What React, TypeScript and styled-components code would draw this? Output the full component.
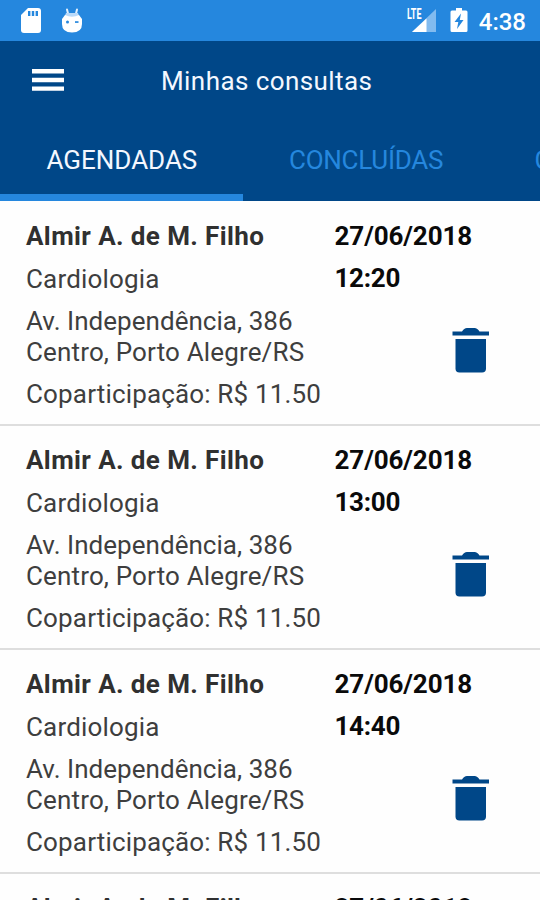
import React from 'react';
import styled, { createGlobalStyle } from 'styled-components';

const navy = '#004788';
const sky = '#2587de';

const GlobalStyle = createGlobalStyle`
  * { box-sizing: border-box; }
  html, body { margin: 0; height: 900px; overflow: hidden; background: #fff; }
  body { font-family: Roboto, "Liberation Sans", sans-serif; }
`;

const Screen = styled.div`
  width: 540px;
  height: 900px;
  overflow: hidden;
  display: flex;
  flex-direction: column;
  background: #fefefe;
`;

const StatusBar = styled.div`
  flex: none;
  height: 41px;
  padding: 0 14px 0 20px;
  display: flex;
  align-items: center;
  justify-content: space-between;
  background: ${sky};
  color: #fff;
`;

const StatusGroup = styled.div`
  display: flex;
  align-items: center;
  height: 41px;
`;

const Icon = styled.svg<{ $gap?: number }>`
  display: block;
  flex: none;
  margin-right: ${(p) => p.$gap ?? 0}px;
`;

const Clock = styled.span`
  font-size: 24px;
  font-weight: 500;
  line-height: 28px;
  padding-top: 2px;
`;

const AppBar = styled.header`
  flex: none;
  height: 79px;
  padding-left: 32px;
  display: flex;
  align-items: center;
  background: ${navy};
`;

const MenuButton = styled.button`
  border: 0;
  padding: 0 0 2px;
  margin: 0 97px 0 0;
  background: none;
`;

const Title = styled.h1`
  margin: 0;
  font-size: 26px;
  line-height: 30px;
  font-weight: 400;
  color: #f4f8ff;
  letter-spacing: 0.42px;
`;

const Tabs = styled.nav`
  flex: none;
  height: 81px;
  display: flex;
  background: ${navy};
  overflow: hidden;
`;

const Tab = styled.div<{ $active?: boolean; $width: number }>`
  flex: none;
  width: ${(p) => p.$width}px;
  padding-left: 46.5px;
  padding-top: 25px;
  border-bottom: 7px solid ${(p) => (p.$active ? sky : 'transparent')};
  color: ${(p) => (p.$active ? '#f4f8ff' : sky)};
  font-size: 26px;
  line-height: 30px;
  letter-spacing: ${(p) => (p.$active ? 0 : -0.25)}px;
  white-space: nowrap;
`;

const List = styled.main`
  padding-top: 1px;
`;

const Row = styled.article`
  height: 224px;
  padding: 19px 0 0 26px;
  display: flex;
  border-bottom: 2px solid #dedede;
`;

const Details = styled.div`
  width: 308.5px;
  flex: none;
  color: #3e3e3e;
  font-size: 26px;
  line-height: 30.5px;
  white-space: nowrap;
`;

const Line = styled.div<{ $strong?: boolean; $spacing?: number; $tight?: boolean }>`
  margin-bottom: ${(p) => (p.$tight ? 0 : 12)}px;
  font-weight: ${(p) => (p.$strong ? 700 : 400)};
  color: ${(p) => (p.$strong ? '#303030' : 'inherit')};
  letter-spacing: ${(p) => p.$spacing ?? 0}px;
`;

const Schedule = styled.div`
  flex: 1;
  display: flex;
  flex-direction: column;
`;

const When = styled.div<{ $spacing: number }>`
  margin-bottom: 12px;
  font-size: 26px;
  line-height: 30px;
  font-weight: 700;
  color: #0a0a0a;
  letter-spacing: ${(p) => p.$spacing}px;
`;

const DeleteButton = styled.button`
  width: 38px;
  margin: 19px 0 0 117.5px;
  padding: 0;
  border: 0;
  background: none;
`;

const SdCard = () => (
  <Icon width="22" height="27" viewBox="0 0 22 27" $gap={19}>
    <path fill="#fff" d="M8 1h10a3 3 0 0 1 3 3v19a3 3 0 0 1-3 3H4a3 3 0 0 1-3-3V8z" />
    <path fill={sky} d="M8 4h2.4v5H8zM11.8 4h2.4v5h-2.4zM15.6 4H18v5h-2.4z" />
  </Icon>
);

const DroidHead = () => (
  <Icon width="22" height="26" viewBox="0 0 22 26">
    <path fill="none" stroke="#e4f1fd" strokeWidth="2" strokeLinecap="round" d="M6 1.500l1 4M16 1.500l-1 4" />
    <path fill="#b9dafa" d="M5 5h12l2 5H3z" />
    <path fill="#fff" d="M4 7q7 3.500 14 0l3 4v5q0 8.500-10 8.500T1 16v-5z" />
    <circle cx="6.500" cy="14" r="1.500" fill={sky} />
    <path fill={sky} d="M14 13.200h3.500v1.700H14z" />
  </Icon>
);

const SignalBox = styled.div`
  position: relative;
  width: 30px;
  height: 25px;
  margin-right: 14px;
`;

const Network = styled.span`
  position: absolute;
  left: 1px;
  top: -1px;
  font: 700 14px/14px Roboto, sans-serif;
  transform: scaleX(0.64);
  transform-origin: left;
`;

const Signal = () => (
  <SignalBox>
    <Icon width="30" height="25" viewBox="0 0 30 25">
      <path fill="#82bbef" d="M30 1v23H6z" />
      <path fill="#fff" d="M20.500 10.500V24H6z" />
      <path fill={sky} d="M0 0h17v12H0z" />
    </Icon>
    <Network>LTE</Network>
  </SignalBox>
);

const Battery = () => (
  <Icon width="18" height="26" viewBox="0 0 18 26" $gap={11}>
    <path fill="#fff" d="M6 0h6v2.500h4q1.500 0 1.500 1.500v18.500q0 1.500-1.500 1.500H2q-1.500 0-1.500-1.500V4q0-1.500 1.500-1.500h4z" />
    <path fill={sky} d="M11 5.500L4.500 14h3.800L7 21l6.500-9H9.800z" />
  </Icon>
);

const Trash = () => (
  <Icon width="38" height="50" viewBox="0 0 38 50">
    <path fill={navy} d="M3.500 15H34v29.500q0 4-4 4H7.500q-4 0-4-4z" />
    <path fill={navy} d="M.5 7.500h9.500Q12 4 15 4h7.500q3 0 5 3.500H37v4H.5z" />
  </Icon>
);

const times = ['12:20', '13:00', '14:40', '15:20'];

export default function App() {
  return (
    <Screen>
      <GlobalStyle />
      <StatusBar>
        <StatusGroup>
          <SdCard />
          <DroidHead />
        </StatusGroup>
        <StatusGroup>
          <Signal />
          <Battery />
          <Clock>4:38</Clock>
        </StatusGroup>
      </StatusBar>
      <AppBar>
        <MenuButton aria-label="Menu">
          <Icon width="32" height="22" viewBox="0 0 32 22">
            <path fill="#fff" d="M0 0h32v4.500H0zM0 8.700h32v4.500H0zM0 17.400h32v4.300H0z" />
          </Icon>
        </MenuButton>
        <Title>Minhas consultas</Title>
      </AppBar>
      <Tabs>
        <Tab $active $width={242.5}>AGENDADAS</Tab>
        <Tab $width={245.5}>CONCLUÍDAS</Tab>
        <Tab $width={246}>CANCELADAS</Tab>
      </Tabs>
      <List>
        {times.map((time) => (
          <Row key={time}>
            <Details>
              <Line $strong $spacing={0.4}>Almir A. de M. Filho</Line>
              <Line $spacing={0.18}>Cardiologia</Line>
              <Line $tight $spacing={0.04}>Av. Independência, 386</Line>
              <Line $spacing={0.15}>Centro, Porto Alegre/RS</Line>
              <Line $spacing={0.16}>Coparticipação: R$ 11.50</Line>
            </Details>
            <Schedule>
              <When $spacing={-0.1}>27/06/2018</When>
              <When $spacing={-0.3}>{time}</When>
              <DeleteButton aria-label="Excluir">
                <Trash />
              </DeleteButton>
            </Schedule>
          </Row>
        ))}
      </List>
    </Screen>
  );
}
